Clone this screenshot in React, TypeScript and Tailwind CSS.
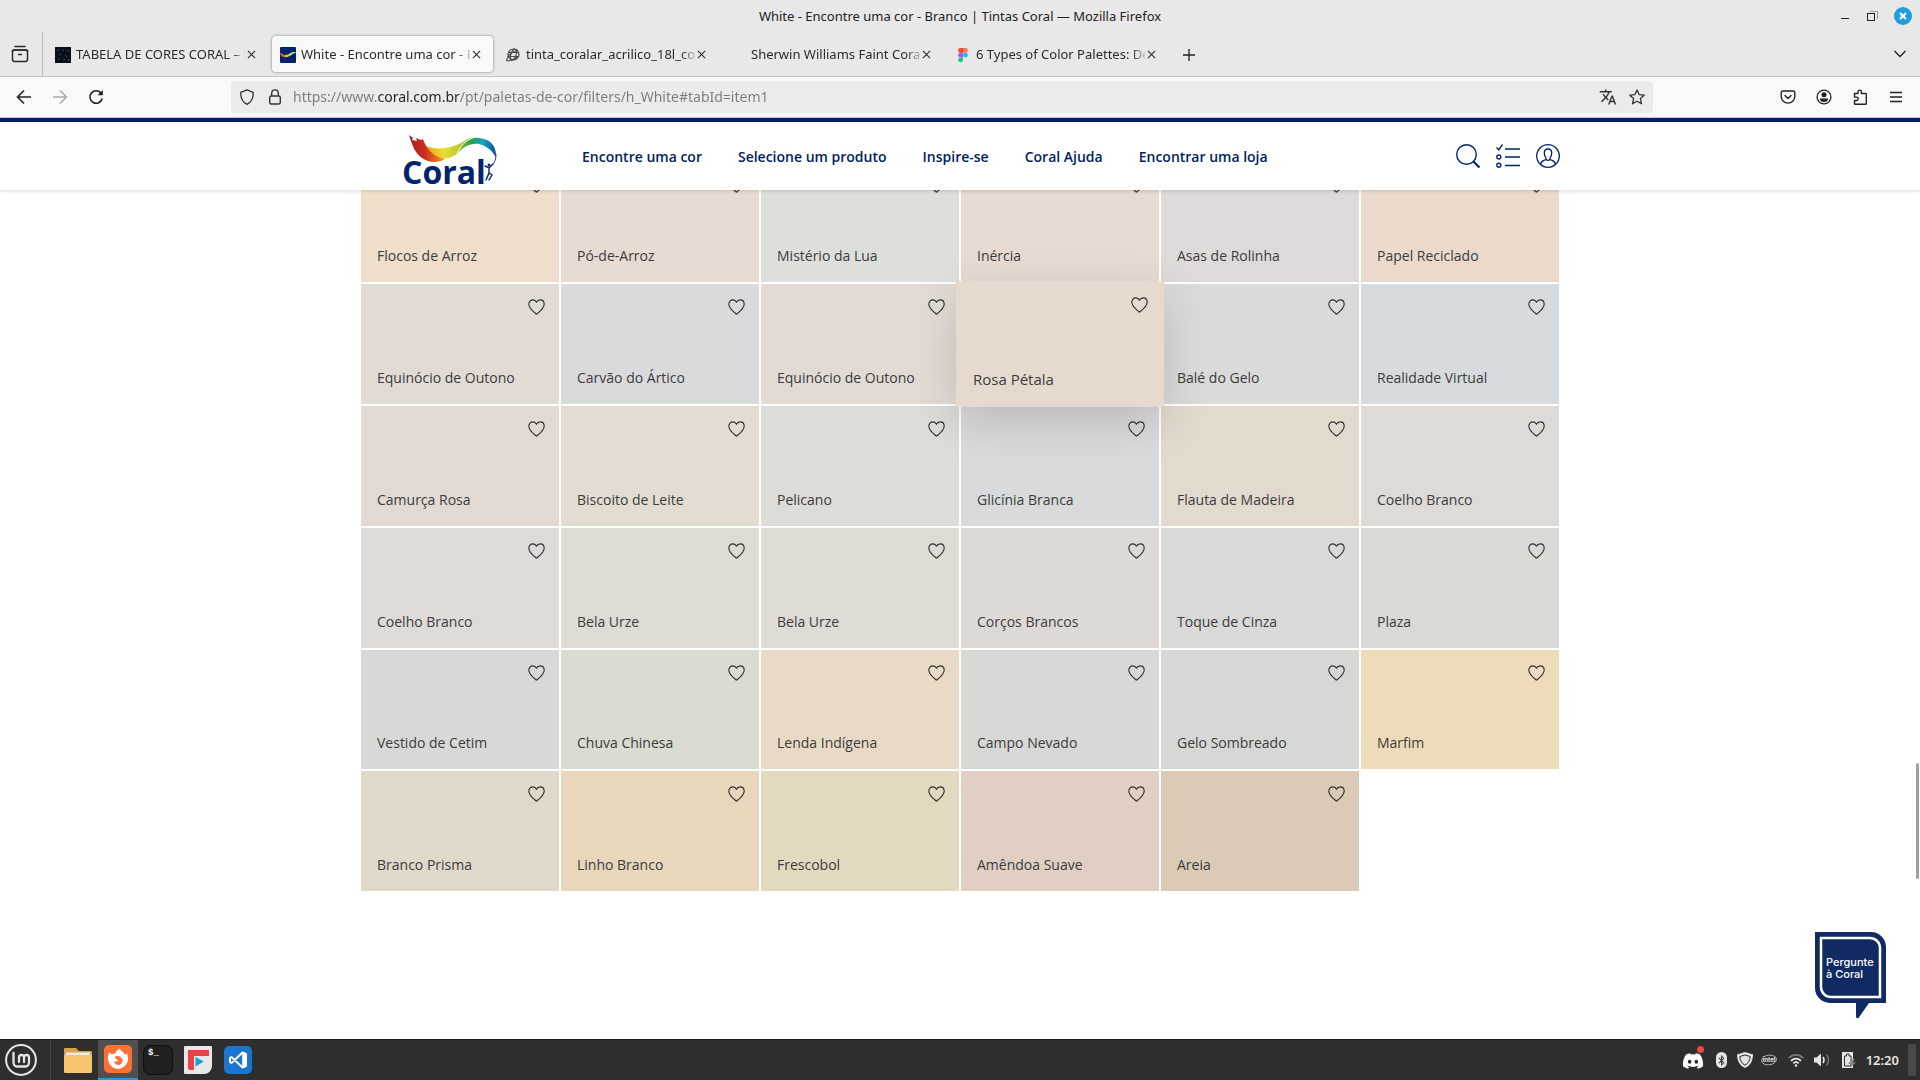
import React from "react";
import { FaBluetoothB, FaDiscord } from "react-icons/fa";
import { MdTranslate } from "react-icons/md";

type Swatch = { name: string; color: string; raised?: boolean };

const swatches: Swatch[] = [
  { name: "Flocos de Arroz", color: "#EFDECA" },
  { name: "Pó-de-Arroz", color: "#E8DBD2" },
  { name: "Mistério da Lua", color: "#DDDFDA" },
  { name: "Inércia", color: "#E6DAD1" },
  { name: "Asas de Rolinha", color: "#DEDADA" },
  { name: "Papel Reciclado", color: "#EBDACC" },
  { name: "Equinócio de Outono", color: "#E2DBD4" },
  { name: "Carvão do Ártico", color: "#DADADC" },
  { name: "Equinócio de Outono", color: "#E2DBD4" },
  { name: "Rosa Pétala", color: "#E6DACE", raised: true },
  { name: "Balé do Gelo", color: "#DADADA" },
  { name: "Realidade Virtual", color: "#D6DBDF" },
  { name: "Camurça Rosa", color: "#E3D9D3" },
  { name: "Biscoito de Leite", color: "#E3DCD0" },
  { name: "Pelicano", color: "#DDDCD6" },
  { name: "Glicínia Branca", color: "#D8DADC" },
  { name: "Flauta de Madeira", color: "#E3DACE" },
  { name: "Coelho Branco", color: "#DEDAD7" },
  { name: "Coelho Branco", color: "#DEDAD7" },
  { name: "Bela Urze", color: "#DFDAD4" },
  { name: "Bela Urze", color: "#DFDAD4" },
  { name: "Corços Brancos", color: "#DFD9D5" },
  { name: "Toque de Cinza", color: "#D9DAD8" },
  { name: "Plaza", color: "#D9DAD5" },
  { name: "Vestido de Cetim", color: "#D8D9D7" },
  { name: "Chuva Chinesa", color: "#DADBD1" },
  { name: "Lenda Indígena", color: "#E8DAC6" },
  { name: "Campo Nevado", color: "#D8D8D6" },
  { name: "Gelo Sombreado", color: "#D6D8D5" },
  { name: "Marfim", color: "#EDDBBA" },
  { name: "Branco Prisma", color: "#E0D8C9" },
  { name: "Linho Branco", color: "#E8D7BD" },
  { name: "Frescobol", color: "#E3D9BE" },
  { name: "Amêndoa Suave", color: "#E1CFC3" },
  { name: "Areia", color: "#DBCAB5" },
];

function Heart() {
  return (
    <svg viewBox="0 0 17 16" className="block h-4 w-[17px]" fill="none" stroke="#2d2d2d" strokeWidth="1.1" strokeLinejoin="round">
      <path d="M8.5 15.2 C5.6 12.8 0.8 9.3 0.8 5.2 C0.8 2.6 2.6 0.9 4.8 0.9 C6.6 0.9 7.9 1.8 8.5 3.2 C9.1 1.8 10.4 0.9 12.2 0.9 C14.4 0.9 16.2 2.6 16.2 5.2 C16.2 9.3 11.4 12.8 8.5 15.2Z" />
    </svg>
  );
}

function Tile({ swatch }: { swatch: Swatch }) {
  if (swatch.raised) {
    return (
      <article className="relative z-[5]">
        <div
          className="absolute -inset-x-[5px] -inset-y-[3px] flex flex-col items-start justify-between pl-[17px] pr-4 pt-4 pb-[18px] shadow-[0_15px_45px_rgba(0,0,0,0.15)]"
          style={{ backgroundColor: swatch.color }}
        >
          <button type="button" aria-label={"Favoritar " + swatch.name} className="self-end">
            <Heart />
          </button>
          <a href="#rosa" className="text-[15px] leading-5 text-[#3c3c3c]">{swatch.name}</a>
        </div>
      </article>
    );
  }
  return (
    <article className="flex flex-col items-start justify-between pl-4 pr-3.5 pt-[15px] pb-4" style={{ backgroundColor: swatch.color }}>
      <button type="button" aria-label={"Favoritar " + swatch.name} className="self-end">
        <Heart />
      </button>
      <a href="#cor" className="text-sm leading-5 text-[#3c3c3c]">{swatch.name}</a>
    </article>
  );
}

function CloseX() {
  return (
    <svg viewBox="0 0 10 10" className="size-[9px]" stroke="#2b2b2b" strokeWidth="1.2">
      <path d="M1 1 L9 9 M9 1 L1 9" />
    </svg>
  );
}

const favicons: Record<string, React.ReactNode> = {
  dark: (
    <svg viewBox="0 0 16 16" className="size-4">
      <rect width="16" height="16" fill="#0b0f1a" />
      <path d="M2 3l2 1M7 2l2 2M12 4l2-1M4 8l2-1M10 8l2 2M3 13l2-2M8 13l2-1M13 12l1 2" stroke="#31496e" />
    </svg>
  ),
  coral: (
    <svg viewBox="0 0 16 16" className="size-4">
      <rect width="16" height="16" rx="1" fill="#00246b" />
      <path d="M0 5.500 C2 8 6 8.800 9 7 C12 5.200 14 4.500 16 5.500 C13 6 11 9 7.500 10 C4 11 1 10 0 5.500Z" fill="#f6c21c" />
      <path d="M0 5.500 C1 7.500 3 8.300 5 8.300 L4.500 10.300 C2 10 0.500 8.500 0 5.500Z" fill="#e2432a" />
      <path d="M9 7 C12 5.200 14 4.500 16 5.500 C14 5.800 12 7 10.500 8.500Z" fill="#a9d6b0" />
    </svg>
  ),
  globe: (
    <svg viewBox="0 0 16 16" className="size-4" fill="none" stroke="#4a4a4a" strokeWidth="1.200">
      <circle cx="8.500" cy="7.500" r="5.500" />
      <ellipse cx="8.500" cy="7.500" rx="2.600" ry="5.500" transform="rotate(20 8.5 7.5)" />
      <path d="M3.500 5.500 L14 5.500 M3 9.500 L13.500 9.500 M2 14 C1 11 5 5 13 3" />
      <path d="M1.500 13.500 C4 14.500 9 13 12 10" />
    </svg>
  ),
  figma: (
    <svg viewBox="0 0 16 16" className="size-4">
      <path d="M5.500 1H8v4.800H5.500a2.400 2.400 0 0 1 0-4.800Z" fill="#f24e1e" />
      <path d="M8 1h2.500a2.400 2.400 0 0 1 0 4.800H8Z" fill="#ff7262" />
      <path d="M5.500 5.800H8v4.700H5.500a2.350 2.350 0 0 1 0-4.700Z" fill="#a259ff" />
      <circle cx="10.500" cy="8.100" r="2.400" fill="#1abcfe" />
      <path d="M5.500 10.500H8v2.300a2.400 2.400 0 1 1-2.500-2.300Z" fill="#0acf83" />
    </svg>
  ),
  none: <span className="size-4" />,
};

const tabs = [
  { icon: "dark", title: "TABELA DE CORES CORAL – P" },
  { icon: "coral", title: "White - Encontre uma cor - Branco", active: true },
  { icon: "globe", title: "tinta_coralar_acrilico_18l_coral" },
  { icon: "none", title: "Sherwin Williams Faint Coral" },
  { icon: "figma", title: "6 Types of Color Palettes: Definition" },
];

function BrowserChrome() {
  const icon = "size-4 shrink-0";
  return (
    <div className="shrink-0 font-['Noto_Sans',sans-serif] text-[#2b2b2b]">
      <div className="relative flex h-8 items-center justify-center bg-[#e8e8e8] text-[13px] text-[#222]">
        <span className="pt-0.5">White - Encontre uma cor - Branco | Tintas Coral — Mozilla Firefox</span>
        <div className="absolute inset-y-0 right-2 flex items-center gap-4">
          <button type="button" aria-label="Minimizar">
            <svg viewBox="0 0 10 10" className="size-2.5"><path d="M1 7.500H9" stroke="#222" /></svg>
          </button>
          <button type="button" aria-label="Restaurar">
            <svg viewBox="0 0 12 12" className="size-3" fill="none">
              <path d="M4 1.500H11.500V9" stroke="#999" />
              <rect x="1.500" y="3.500" width="7" height="7" stroke="#222" />
            </svg>
          </button>
          <button type="button" aria-label="Fechar" className="flex size-[18px] items-center justify-center rounded-full bg-[#1f9ede]">
            <svg viewBox="0 0 8 8" className="size-2" stroke="#fff" strokeWidth="2"><path d="M1 1L7 7M7 1L1 7" /></svg>
          </button>
        </div>
      </div>

      <div className="flex h-[45px] items-stretch border-b border-[#c8c8c8] bg-[#e8e8e8]">
        <button type="button" aria-label="Firefox View" className="flex w-[43px] items-center justify-center border-r border-[#b8b8b8] pr-0.5">
          <svg viewBox="0 0 18 18" className="size-[18px]" fill="none" stroke="#2b2b2b" strokeWidth="1.500" strokeLinecap="round">
            <path d="M4 1.500H14M2.500 5H15.500" />
            <path d="M1.500 5.500V14.500a2 2 0 0 0 2 2h11a2 2 0 0 0 2-2V5.500" />
            <path d="M1.500 6.500a1.500 1.500 0 0 1 1.500-1.500H15a1.500 1.500 0 0 1 1.500 1.500M7.500 9.500h3" />
          </svg>
        </button>
        <div className="ml-0.5 flex items-stretch py-1">
          {tabs.map((t) => (
            <div key={t.title} className="flex w-[225px] px-0.5">
              <div className={"flex min-w-0 flex-1 items-center rounded pl-2 pr-3 pt-px " + (t.active ? "bg-[#f9f9f9] shadow-[0_0_3px_rgba(0,0,0,0.45)]" : "")}>
                {favicons[t.icon]}
                <button type="button" className="ml-[5px] w-[169px] overflow-hidden text-left text-[13px] whitespace-nowrap [mask-image:linear-gradient(to_right,black_155px,transparent_173px)]">
                  {t.title}
                </button>
                <button type="button" aria-label="Fechar aba" className="ml-0.5 shrink-0"><CloseX /></button>
              </div>
            </div>
          ))}
        </div>
        <button type="button" aria-label="Nova aba" className="ml-3 flex w-3.5 items-center pt-px">
          <svg viewBox="0 0 14 14" className="size-3.5" stroke="#222" strokeWidth="1.300"><path d="M7 1V13M1 7H13" /></svg>
        </button>
        <button type="button" aria-label="Listar abas" className="mr-3.5 ml-auto flex w-3 items-center">
          <svg viewBox="0 0 12 8" className="h-2 w-3" fill="none" stroke="#222" strokeWidth="1.300"><path d="M0.500 1L6 6.500L11.500 1" /></svg>
        </button>
      </div>

      <div className="flex h-[41px] items-center border-b border-[#c8c8c8] bg-[#f9f9f9] pr-4 pl-4">
        <div className="flex w-[215px] shrink-0 items-center gap-5">
          <button type="button" aria-label="Voltar">
            <svg viewBox="0 0 16 16" className={icon} fill="none" stroke="#222" strokeWidth="1.600"><path d="M15 8H2M8 1.500L1.500 8L8 14.500" /></svg>
          </button>
          <button type="button" aria-label="Avançar">
            <svg viewBox="0 0 16 16" className={icon} fill="none" stroke="#aaa" strokeWidth="1.500"><path d="M1 8H14M8 1.500L14.500 8L8 14.500" /></svg>
          </button>
          <button type="button" aria-label="Recarregar">
            <svg viewBox="0 0 16 16" className={icon} fill="none" stroke="#222" strokeWidth="1.600">
              <path d="M13.300 4.500A6.200 6.200 0 1 0 14.200 9.500" />
              <path d="M14.800 1V6.200H9.600Z" fill="#222" stroke="none" />
            </svg>
          </button>
        </div>
        <div className="flex h-8 max-w-[1422px] min-w-0 flex-1 items-center rounded bg-[#ebebeb] pr-2 pl-2">
          <svg viewBox="0 0 16 16" className={icon} fill="none" stroke="#333" strokeWidth="1.300" strokeLinejoin="round">
            <path d="M8 0.800L14.200 3.300C14.500 8.500 12.500 13 8 15.300C3.500 13 1.500 8.500 1.800 3.300Z" />
          </svg>
          <svg viewBox="0 0 16 16" className="ml-3 size-4 shrink-0" fill="none" stroke="#333" strokeWidth="1.400">
            <path d="M4.700 7V4.200a3.300 3.300 0 0 1 6.600 0V7" />
            <rect x="2.700" y="7" width="10.600" height="8" rx="1.500" />
          </svg>
          <input
            aria-label="Endereço"
            readOnly
            defaultValue="https://www.coral.com.br/pt/paletas-de-cor/filters/h_White#tabId=item1"
            className="ml-[10px] min-w-0 flex-1 bg-[linear-gradient(to_right,#7b7b7b_84px,#222_84px,#222_166px,#7b7b7b_166px)] bg-clip-text text-sm text-transparent outline-none"
          />
          <button type="button" aria-label="Traduzir" className="mr-3"><MdTranslate className="size-[18px] text-[#333]" /></button>
          <button type="button" aria-label="Favoritos">
            <svg viewBox="0 0 16 16" className={icon} fill="none" stroke="#333" strokeWidth="1.300" strokeLinejoin="round">
              <path d="M8 1L10.100 5.600L15.200 6.200L11.400 9.600L12.500 14.800L8 12.200L3.500 14.800L4.600 9.600L0.800 6.200L5.900 5.600Z" />
            </svg>
          </button>
        </div>
        <div className="ml-auto flex items-center gap-5">
          <button type="button" aria-label="Pocket">
            <svg viewBox="0 0 16 16" className={icon} fill="none" stroke="#222" strokeWidth="1.400" strokeLinecap="round" strokeLinejoin="round">
              <path d="M2.500 2H13.500a1.300 1.300 0 0 1 1.300 1.300V7.500a6.800 6.600 0 0 1-13.600 0V3.300A1.300 1.300 0 0 1 2.500 2Z" /><path d="M5 6.500L8 9.400L11 6.500" />
            </svg>
          </button>
          <button type="button" aria-label="Conta">
            <svg viewBox="0 0 16 16" className={icon} fill="none">
              <circle cx="8" cy="8" r="6.900" stroke="#222" strokeWidth="1.300" /><circle cx="8" cy="5.800" r="2.500" fill="#222" /><path d="M3.800 9.500H12.200C12 12 10.500 13 8 13S4 12 3.800 9.500Z" fill="#222" />
            </svg>
          </button>
          <button type="button" aria-label="Extensões">
            <svg viewBox="0 0 16 16" className={icon} fill="none" stroke="#222" strokeWidth="1.400" strokeLinejoin="round">
              <path d="M2.500 4.500H6V2.800a1.700 1.700 0 0 1 3.400 0V4.500H13.500a.8.800 0 0 1 .8.800V14.500a.8.800 0 0 1-.8.800H3.300a.8.800 0 0 1-.8-.8V11.500H4.500a1.700 1.700 0 0 0 0-3.400H2.500Z" />
            </svg>
          </button>
          <button type="button" aria-label="Menu">
            <svg viewBox="0 0 16 16" className={icon} stroke="#222" strokeWidth="1.300"><path d="M2 3.500H14M2 8H14M2 12.500H14" /></svg>
          </button>
        </div>
      </div>
    </div>
  );
}

function CoralLogo() {
  return (
    <svg viewBox="0 0 94 54" className="h-[54px] w-[94px]" role="img" aria-label="Coral">
      <defs>
        <linearGradient id="swoosh" x1="0" x2="1">
          <stop offset="0" stopColor="#a31d1f" />
          <stop offset="0.450" stopColor="#cf2f1f" />
          <stop offset="0.750" stopColor="#e8681c" />
          <stop offset="1" stopColor="#f0a01d" />
        </linearGradient>
        <linearGradient id="band" x1="0" x2="1">
          <stop offset="0" stopColor="#f1a21b" />
          <stop offset="0.400" stopColor="#e9dc34" />
          <stop offset="1" stopColor="#8fbd2e" />
        </linearGradient>
        <linearGradient id="wave" x1="0" x2="1">
          <stop offset="0" stopColor="#9fc52c" />
          <stop offset="0.350" stopColor="#2f9f45" />
          <stop offset="0.650" stopColor="#18a5c2" />
          <stop offset="1" stopColor="#0a4f9c" />
        </linearGradient>
      </defs>
      <path d="M22 12 C34 16 46 15 58 9 C62 6 66 4 70 3 C62 9 58 20 46 24 C38 26 28 22 22 12Z" fill="url(#band)" />
      <path d="M6 1 L10 4 L9 6 L14 7 L13 4 L18 6 L20 5 C23 14 29 22 42 25 C36 29 26 29 19 24 C12 19 9 11 6 1Z" fill="url(#swoosh)" />
      <path d="M54 20 C60 7 68 3 76 4 C88 5 94 13 93 24 C90 17 84 12 76 10 C67 9 60 13 54 20Z" fill="url(#wave)" />
      <path d="M54 20 C58 11 63 6 70 4" fill="none" stroke="#fff" />
      <path d="M93 20 C93 25 92 28 89 31" fill="none" stroke="#17498c" strokeWidth="1" />
      <path d="M82 32 L86 34 L90 30 M86 34 L86 39 L83 46 M86 39 L89 41 L86 46" fill="none" stroke="#00246b" strokeWidth="1.400" strokeLinecap="round" />
      <circle cx="86" cy="31" r="1.500" fill="#00246b" />
      <text x="-1" y="50" fontFamily="Open Sans, sans-serif" fontWeight="700" fontSize="32" fill="#00246b">Coral</text>
    </svg>
  );
}

function SiteHeader() {
  return (
    <header className="relative z-10 border-t-4 border-[#001e62] bg-white shadow-[0_1px_4px_rgba(0,0,0,0.15)]">
      <div className="mx-auto flex h-[68px] max-w-[1200px] items-center">
        <a href="#inicio" className="ml-[43px] pt-2.5"><CoralLogo /></a>
        <nav className="ml-[85px] flex gap-9 pt-0.5 text-sm font-semibold text-[#001e62]">
          <a href="#cores">Encontre uma cor</a>
          <a href="#produtos">Selecione um produto</a>
          <a href="#inspire">Inspire-se</a>
          <a href="#ajuda">Coral Ajuda</a>
          <a href="#loja">Encontrar uma loja</a>
        </nav>
        <div className="ml-auto flex gap-4">
          <button type="button" aria-label="Buscar">
            <svg viewBox="0 0 24 24" className="size-6" fill="none" stroke="#00246b" strokeWidth="1.400">
              <circle cx="10.500" cy="10.500" r="9.800" /><path d="M17.500 17.500L23.500 23.500" strokeWidth="2.200" />
            </svg>
          </button>
          <button type="button" aria-label="Lista">
            <svg viewBox="0 0 24 24" className="size-6" fill="none" stroke="#00246b" strokeWidth="1.400">
              <path d="M0.500 3.500L2.800 5.800L6.500 0.500M9 5H24M9 13H24M9 21.500H24" /><circle cx="2.800" cy="13" r="2" /><circle cx="2.800" cy="21.300" r="2" />
            </svg>
          </button>
          <button type="button" aria-label="Perfil">
            <svg viewBox="0 0 24 24" className="size-6" fill="none" stroke="#00246b" strokeWidth="1.300">
              <circle cx="12" cy="12" r="11.300" />
              <path d="M12 5C9.500 5 8.300 6.700 8.300 9C8.300 11.500 9 13 10 14V15.500C8 16.500 5 16.500 4.500 20.200M12 5C14.500 5 15.700 6.700 15.700 9C15.700 11.500 15 13 14 14V15.500C16 16.500 19 16.500 19.500 20.200M10 15.500C11 16.500 13 16.500 14 15.500" />
            </svg>
          </button>
        </div>
      </div>
    </header>
  );
}

function ChatBubble() {
  return (
    <button type="button" className="absolute right-[34px] bottom-5 z-10 text-left">
      <svg viewBox="0 0 71 87" className="block h-[87px] w-[71px]">
        <path d="M0 0H56A15 15 0 0 1 71 15V71H54L43.500 86Q41 87 41 84V71H15A15 15 0 0 1 0 56Z" fill="#102a63" />
        <path d="M6 6H55A10 10 0 0 1 65 16V65H16A10 10 0 0 1 6 55Z" fill="none" stroke="#fff" strokeWidth="2.500" />
      </svg>
      <span className="absolute top-6 left-[11px] font-['Inter',sans-serif] text-[11px] leading-3 font-medium text-white">
        Pergunte<br />à Coral
      </span>
    </button>
  );
}

function Taskbar() {
  const cell = "flex w-10 items-center justify-center";
  return (
    <footer className="flex h-[41px] shrink-0 items-stretch border-t border-[#1c1c1c] bg-[#2e2e2e]">
      <button type="button" aria-label="Menu do sistema" className="flex w-[51px] items-center border-r border-[#444] pl-[5px]">
        <svg viewBox="0 0 32 32" className="size-8" fill="none" stroke="#e4e4e4">
          <circle cx="16" cy="16" r="14.900" strokeWidth="2" />
          <path d="M8.500 9V18.500a4 4 0 0 0 4 4H20a4 4 0 0 0 4-4V13.500a2.500 2.500 0 0 0-5 0V18M19 13.500a2.500 2.500 0 0 0-5 0V18" strokeWidth="2.300" strokeLinecap="round" />
        </svg>
      </button>
      <div className="ml-[7px] flex">
        <button type="button" aria-label="Arquivos" className={cell}>
          <svg viewBox="0 0 28 26" className="h-[26px] w-7">
            <path d="M0 2A1 1 0 0 1 1 1H12L15 4H27A1 1 0 0 1 28 5V10H0Z" fill="#d8a14a" /><rect x="2" y="5.500" width="24" height="4" fill="#ececec" />
            <path d="M0 8H28V25A1 1 0 0 1 27 26H1A1 1 0 0 1 0 25Z" fill="#f6c46f" />
          </svg>
        </button>
        <button type="button" aria-label="Firefox" className="flex w-10 items-center justify-center border-b-2 border-[#1f9ede] bg-[#505050]">
          <svg viewBox="0 0 28 28" className="size-7">
            <rect width="28" height="28" rx="5" fill="#fb7135" />
            <path d="M5.500 7.500L8 9.500C9 8.500 10.300 8.200 11.500 8.500C12 6 14 4 16 3.500C16 6 20 7 21.500 10L23 8.500C24.500 12 24.500 16.500 22 19.800A10 10 0 0 1 5 18C3.300 14.500 3.800 10.500 5.500 7.500Z" fill="#fff" />
            <path d="M11 11.500C12.500 10.500 16.500 10.500 18 13.500A4.300 4.300 0 1 1 10 16C11.500 17 13.500 16.500 14.500 15.200C12.500 15.500 12.500 13.500 11 13Z" fill="#fb7135" />
          </svg>
        </button>
        <button type="button" aria-label="Terminal" className={cell}>
          <span className="flex size-7 items-start rounded-md bg-[#202020] pl-1 font-['Liberation_Mono',monospace] text-[9px] leading-[14px] font-bold text-white ring-1 ring-[#111]">$_</span>
        </button>
        <button type="button" aria-label="Editor de vídeo" className={cell}>
          <svg viewBox="0 0 28 28" className="size-7">
            <path d="M1 0H27A1 1 0 0 1 28 1V20A8 8 0 0 1 20 28H1A1 1 0 0 1 0 27V1A1 1 0 0 1 1 0Z" fill="#e8e8e8" />
            <path d="M4 4H25V10H10V24H6A2 2 0 0 1 4 22Z" fill="#ef3f49" /><path d="M11.500 11L20 15.500L11.500 20.500Z" fill="#1e9fdc" />
          </svg>
        </button>
        <button type="button" aria-label="VS Code" className={cell}>
          <svg viewBox="0 0 28 28" className="size-7">
            <rect width="28" height="28" rx="5" fill="#1a75cf" />
            <path d="M18.500 6.500L22 8V20L18.500 21.500L7.500 11L6 12V16L7.500 17L18.500 6.500Z" fill="none" stroke="#fff" strokeWidth="2" strokeLinejoin="round" />
            <path d="M18.200 7L21.800 8.500V19.500L18.200 21Z" fill="#fff" />
          </svg>
        </button>
      </div>
      <div className="ml-auto flex items-center text-[#e4e4e4]">
        <div className="relative mr-3 pt-0.5"><FaDiscord className="size-[22px] text-white" /><span className="absolute -top-0.5 right-0 size-[7px] rounded-full bg-[#f04747]" /></div>
        <div className="mr-2.5 flex h-4 w-[11px] items-center justify-center rounded-full bg-[#e4e4e4]"><FaBluetoothB className="size-[11px] text-[#2e2e2e]" /></div>
        <svg viewBox="0 0 16 16" className="mr-2 size-4">
          <path d="M8 0L16 2.500C16 9 13 14 8 16C3 14 0 9 0 2.500Z" fill="#e4e4e4" /><path d="M8 3L13.200 4.500C13 8.500 11 11.800 8 13.200C5 11.800 3 8.500 2.800 4.500Z" fill="none" stroke="#2e2e2e" />
        </svg>
        <svg viewBox="0 0 16 12" className="mr-[11px] h-3 w-4">
          <ellipse cx="8" cy="6" rx="7.500" ry="4.800" fill="none" stroke="#b8b8b8" strokeWidth="0.900" transform="rotate(-8 8 6)" />
          <text x="8" y="8.200" textAnchor="middle" fontFamily="Inter, sans-serif" fontSize="6" fontWeight="700" fill="#e4e4e4">intel</text>
        </svg>
        <svg viewBox="0 0 16 14" className="mr-2.5 h-3.5 w-4" fill="none" strokeWidth="1.800">
          <path d="M0.800 5C5 0.800 11 0.800 15.200 5" stroke="#777" /><path d="M3 7.800C6 5 10 5 13 7.800" stroke="#e4e4e4" /><path d="M5.300 10.300C7 8.700 9 8.700 10.700 10.300" stroke="#e4e4e4" /><circle cx="8" cy="12.500" r="1.300" fill="#e4e4e4" />
        </svg>
        <svg viewBox="0 0 16 14" className="mr-3 h-3.5 w-4" fill="none">
          <path d="M0 4.500H2.500L7 0.500V13.500L2.500 9.500H0Z" fill="#e4e4e4" /><path d="M9 4Q11 7 9 10" stroke="#e4e4e4" strokeWidth="1.600" /><path d="M12.500 1.500Q16.500 7 12.500 12.500" stroke="#777" strokeWidth="1.400" />
        </svg>
        <svg viewBox="0 0 14 16" className="mr-2.5 h-4 w-3.5">
          <path d="M0 0H11V16H0Z" fill="#e4e4e4" /><path d="M2.500 4H4.500V2H7V4H9V14H2.500Z" fill="none" stroke="#2e2e2e" /><path d="M10.500 7L6 12H9L8 16L14 10.500H11L12.500 7Z" fill="#8a8a8a" />
        </svg>
        <time className="mr-[9px] pt-px font-['Noto_Sans',sans-serif] text-[13px] font-semibold">12:20</time>
        <button type="button" aria-label="Mostrar área de trabalho" className="mr-1 h-8 w-2 bg-[#484848]" />
      </div>
    </footer>
  );
}

export default function App() {
  return (
    <div className="flex h-screen flex-col overflow-hidden bg-white">
      <BrowserChrome />
      <main className="relative min-h-0 flex-1 overflow-hidden bg-white font-['Open_Sans',sans-serif]">
        <SiteHeader />
        <section aria-label="Cores brancas" className="mx-auto -mt-7 grid max-w-[1198px] auto-rows-[120px] grid-cols-6 grid-rows-[repeat(4,120px)_119px] gap-0.5">
          {swatches.map((s, i) => (
            <Tile key={i} swatch={s} />
          ))}
        </section>
        <ChatBubble />
        <div className="absolute top-[645px] right-px h-[116px] w-[3px] rounded-full bg-[#a0a0a0]" />
      </main>
      <Taskbar />
    </div>
  );
}
